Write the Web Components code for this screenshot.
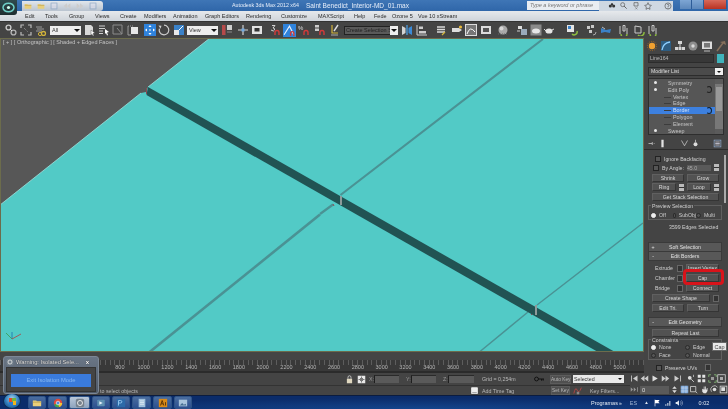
<!doctype html>
<html>
<head>
<meta charset="utf-8">
<style>
  html, body { margin: 0; padding: 0; background: #444; }
  body { font: 6.5px "Liberation Sans", sans-serif; overflow: hidden; }
</style>
</head>
<body>
<max-app></max-app>
<script>
"use strict";
// small 12x12 glyphs, all hand drawn to look like the Max toolbar
const ICONS = {
  link: '<circle cx="3.5" cy="3.5" r="2.4" fill="none" stroke="#c9c9c9" stroke-width="1.4"/><circle cx="8.5" cy="8.5" r="2.4" fill="none" stroke="#b0b0b0" stroke-width="1.4"/><path d="M5 5l2 2" stroke="#ddd"/>',
  unlink: '<path d="M1 4V1h3M8 1h3v3M11 8v3H8M4 11H1V8" fill="none" stroke="#bbb" stroke-width="1.2"/><path d="M4 4l4 4" stroke="#999" stroke-dasharray="1 1"/>',
  bind: '<path d="M1 3h6M2 5h7M1 7h6" stroke="#9a9a9a"/><circle cx="8.5" cy="9.5" r="2" fill="none" stroke="#d2b33a" stroke-width="1.3"/><circle cx="5" cy="10" r="1.6" fill="none" stroke="#d2b33a"/>',
  select: '<path d="M1 1h6l2 2v8H1z" fill="#d9d9d9"/><path d="M7 6l4 3-2 .5 1 2-1 .5-1-2-1 1z" fill="#fff" stroke="#333" stroke-width=".4"/>',
  named: '<path d="M1 2h6M1 4.500h6M1 7h4M1 9.500h4" stroke="#cfcfcf"/><path d="M7 5l4 3-2 .5 1 2.500-1 .5-1-2.500-1 1z" fill="#fff"/>',
  rect: '<path d="M1 1h9v9H1z" fill="none" stroke="#8b8b8b"/><path d="M10 10L5 4" stroke="#8b8b8b"/>',
  win: '<path d="M1 2h6" stroke="#999" stroke-dasharray="1 1"/><rect x="4" y="3" width="7" height="7" fill="#e6e6e6"/><path d="M1 2v9h3" fill="none" stroke="#999"/>',
  move: '<rect width="12" height="12" fill="#2f83dc"/><path d="M6 1l1.500 2h-3zM6 11l1.500-2h-3zM1 6l2-1.500v3zM11 6L9 4.500v3z" fill="#fff"/><rect x="5.300" y="5.300" width="1.400" height="1.400" fill="#fff"/>',
  rotate: '<path d="M6 1.200a4.800 4.800 0 1 1-4.600 3.400" fill="none" stroke="#cfcfcf" stroke-width="1.200"/><path d="M.5 1.500l3 .3-1 3z" fill="#cfcfcf"/>',
  scale: '<rect x="1" y="1" width="10" height="10" fill="#3b82c8"/><rect x="1" y="6" width="5" height="5" fill="#e8e8e8"/><path d="M6 6l4-4" stroke="#fff"/>',
  pivot: '<rect x="1" y="1" width="3.500" height="10" fill="#b64a4a"/><rect x="6" y="1" width="5" height="5" fill="#cfcfcf"/><path d="M6 8h5" stroke="#888"/>',
  cross: '<path d="M6 1v10M1 6h10" stroke="#cfcfcf" stroke-width="1.200"/><rect x="4.500" y="4.500" width="3" height="3" fill="#6fa7df"/>',
  keys: '<rect x="1" y="2" width="10" height="8" fill="#e2e2e2"/><rect x="3.500" y="4" width="5" height="3.500" fill="#333"/>',
  snap3: '<path d="M3 1.500h3L4 4q2 0 1.500 2T2 6" fill="none" stroke="#e0e0e0" stroke-width=".9"/><path d="M6 11V8.500a2 2 0 0 1 4 0V11" fill="none" stroke="#d23a3a" stroke-width="1.400"/>',
  snapA: '<rect width="12" height="12" fill="#2f83dc"/><path d="M1 10L6 2l4 8" fill="none" stroke="#e8f2ff"/><path d="M7 11V8.500a1.500 1.500 0 0 1 3 0V11" fill="none" stroke="#d23a3a" stroke-width="1.300"/>',
  snapP: '<text x="0" y="6" font-size="6" fill="#ddd" font-family="Liberation Sans">%</text><path d="M6 11V8.500a2 2 0 0 1 4 0V11" fill="none" stroke="#d23a3a" stroke-width="1.400"/>',
  snapS: '<path d="M1 1h4v2.500H1zM1 4.500h4V7H1z" fill="#ccc"/><path d="M6 11V8.500a2 2 0 0 1 4 0V11" fill="none" stroke="#d23a3a" stroke-width="1.400"/>',
  edit: '<path d="M3 1v8h6" fill="none" stroke="#d2b33a" stroke-width="1.200"/><path d="M9 1L5 7" stroke="#ddd" stroke-width="1.400"/><path d="M2 11h7" stroke="#aaa"/>',
  mirror: '<path d="M1 2l3.500 2v5L1 11z" fill="#d3d3d3"/><path d="M6 1v10" stroke="#4ea3ea" stroke-width="1.200"/><path d="M11 2L7.500 4v5l3.500 2z" fill="#3b8ad6"/>',
  align: '<path d="M1 1v10h10" fill="none" stroke="#ccc"/><rect x="3" y="2.500" width="4" height="2.500" fill="#ccc"/><rect x="3" y="7" width="7" height="2.500" fill="#ccc"/>',
  layer: '<path d="M2 3h8M2 5.500h8M2 8h8" stroke="#d8d8d8" stroke-width="1.400"/><path d="M7 11l3-3" stroke="#d2b33a" stroke-width="1.200"/>',
  tag: '<path d="M1 4h7l3 2-3 2H1z" fill="#ddd"/><circle cx="9.500" cy="3" r="1.600" fill="#e8b93a"/>',
  curve: '<rect x=".5" y=".5" width="11" height="11" fill="#777" stroke="#ddd"/><path d="M2 10Q5 1 10 8" fill="none" stroke="#fff"/>',
  sch: '<rect x="1" y="2" width="10" height="8" fill="#dcdcdc"/><rect x="3" y="4" width="6" height="4" fill="#555"/>',
  mat: '<circle cx="6" cy="6" r="4.500" fill="#a9a9a9"/><circle cx="4.500" cy="4.500" r="2" fill="#d8d8d8"/><path d="M1 10h10" stroke="#666" stroke-dasharray="1 1"/>',
  rsetup: '<path d="M2 2h4v3H2z" fill="#ddd"/><path d="M5 5h6v6H5z" fill="#9ab"/><path d="M1 7h3" stroke="#ccc"/>',
  rframe: '<rect x=".5" y=".5" width="11" height="11" fill="#8a8a8a"/><ellipse cx="6" cy="7" rx="4" ry="2.500" fill="#e6e6e6"/>',
  teapot: '<ellipse cx="6" cy="7" rx="3.500" ry="2.600" fill="#e5e5e5"/><path d="M1 5l2 2M9 6l2-1" stroke="#ddd"/>',
  vue1: '<rect x="1" y="1" width="7" height="7" fill="#e5e5e5"/><rect x="2" y="2" width="3" height="3" fill="#3b82c8"/><path d="M6 10a3 3 0 0 0 5-3" fill="none" stroke="#8fbf3f" stroke-width="1.400"/>',
  vue2: '<path d="M2 2h3v3H2zM6 1h3v3H6zM4 6h3v3H4z" fill="#c8c8c8"/><path d="M8 11a3 3 0 0 0 3-3" fill="none" stroke="#aaa"/>',
  vue3: '<path d="M1 4l5 2 5-1-1 4-5-1-4 1z" fill="#3b82c8"/><path d="M2 3l3 2" stroke="#bbb"/>',
  vue4: '<path d="M2 2v8M5 1.500h2V7H5zM9 4v6" stroke="#c8c8c8" fill="none"/><path d="M3 10a3 3 0 0 0 6 0" fill="none" stroke="#8fbf3f" stroke-width="1.300"/>',
  vue5: '<path d="M2 2l6 1v6H2z" fill="none" stroke="#c8c8c8"/><path d="M5 11a3.500 3.500 0 0 0 6-3" fill="none" stroke="#8fbf3f" stroke-width="1.400"/>',
  sun: '<circle cx="6" cy="6" r="3.200" fill="#f0a030"/><circle cx="6" cy="6" r="4.600" fill="none" stroke="#a86a20" stroke-dasharray="1 1"/>',
  arc: '<rect x="1" y="1" width="10" height="10" fill="#2e5d82"/><path d="M2 10Q3 3 10 2" fill="none" stroke="#8fd0ff" stroke-width="1.300"/>',
  tree: '<path d="M4 1h4v3H4zM1 7h3v3H1zM8 7h3v3H8zM4.500 7H7.500v3h-3z" fill="#d4d4d4"/><path d="M6 4v3" stroke="#d4d4d4"/>',
  motion: '<circle cx="6" cy="6" r="4.500" fill="#8d8d8d"/><circle cx="6" cy="6" r="1.700" fill="#d8d8d8"/>',
  display: '<rect x="1" y="1.500" width="10" height="7.500" fill="#dcdcdc"/><rect x="3" y="3" width="6" height="4.500" fill="#777"/><path d="M3 11h6" stroke="#bbb"/>',
  hammer: '<path d="M2 11L8 3" stroke="#86705c" stroke-width="1.500"/><path d="M5 2l5-1 1 4z" fill="#86705c"/>',
  pin: '<path d="M2 6h5M7 4v4M9 6h1" stroke="#ccc"/>',
  col: '<rect x="4.500" y="1" width="3" height="10" fill="#e2e2e2"/>',
  fork: '<path d="M2 2l4 7 4-7" fill="none" stroke="#ccc"/>',
  dot: '<circle cx="6" cy="7" r="2.600" fill="#ddd"/><path d="M6 1v3" stroke="#ccc"/>',
  cfg: '<rect x="1.500" y="1.500" width="9" height="9" fill="none" stroke="#8ea6c8"/><path d="M3 4h6M3 6h6M3 8h6" stroke="#dde"/>',
  lock: '<rect x="2.500" y="5" width="7" height="6" fill="#e0d8c0"/><path d="M4 5V3a2 2 0 0 1 4 0v2" fill="none" stroke="#e0e0e0"/>',
  abs: '<rect x="1" y="1" width="10" height="10" fill="#e8e8e8"/><path d="M6 2v8M2 6h8" stroke="#555"/><rect x="4" y="4" width="4" height="4" fill="#777"/>',
  minibox: '<rect x="1.500" y="1.500" width="9" height="9" rx="1" fill="#eee"/><path d="M3 9h6" stroke="#777"/>',
  key: '<circle cx="3" cy="6" r="2.300" fill="none" stroke="#111" stroke-width="1.200"/><path d="M5 6h7M9 6v2M11 6v2" stroke="#111" stroke-width="1.200"/>',
  wave: '<path d="M1 9q2-9 4-4t5-3" fill="none" stroke="#b34444" stroke-width="1.100"/><rect x="4.500" y="7" width="3" height="3" fill="#888"/>',
  first: '<path d="M2 2v8" stroke="#ddd"/><path d="M10 2L4 6l6 4z" fill="#ccc"/>',
  prev: '<path d="M6 2L1 6l5 4zM11 2L6 6l5 4z" fill="#ccc"/>',
  play: '<path d="M2 2l7 4-7 4z" fill="#ddd"/>',
  next: '<path d="M1 2l5 4-5 4zM6 2l5 4-5 4z" fill="#ccc"/>',
  last: '<path d="M2 2l6 4-6 4z" fill="#ccc"/><path d="M10 2v8" stroke="#ddd"/>',
  keymode: '<path d="M1 3l3 3-3 3zM5 3l3 3-3 3z" fill="#999"/><path d="M10 3v6" stroke="#999"/>',
  zoom: '<circle cx="5" cy="5" r="2.500" fill="#ddd"/><path d="M7 7l3.500 3.500" stroke="#ccc" stroke-width="1.300"/><path d="M10 1v3" stroke="#ccc"/>',
  quad: '<path d="M1 1h4v4H1zM7 1h4v4H7zM1 7h4v4H1zM7 7h4v4H7z" fill="#e3e3e3"/>',
  ext: '<path d="M1 4V1h3M8 1h3v3M11 8v3H8M4 11H1V8" fill="none" stroke="#8ac27a"/><rect x="4" y="4" width="4" height="4" fill="#9a9a9a"/>',
  frame: '<rect x="1" y="1" width="10" height="10" fill="none" stroke="#ddd"/><path d="M4 4h4v4H4z" fill="#aaa"/>',
  grid: '<rect x="1" y="1" width="10" height="10" fill="#7aa5d8"/><path d="M4 1v10M8 1v10M1 4h10M1 8h10" stroke="#e8eef8" stroke-width=".6"/>',
  corner: '<path d="M2 2h7v7H2z" fill="none" stroke="#ddd"/><path d="M9 9l2 2" stroke="#ddd"/>',
  hand: '<path d="M3 5v4l2 2h3l2-3V4H9v2H8V2H7v4H6V2H5v4z" fill="#e3e3e3"/>',
  orbit: '<circle cx="6" cy="6" r="2.400" fill="#ddd"/><path d="M2 9a5 5 0 0 1 8-6" fill="none" stroke="#ccc"/>',
  maxim: '<rect x="1.500" y="1.500" width="9" height="9" fill="none" stroke="#ddd"/><rect x="3" y="3" width="5" height="5" fill="#ddd"/>',
  spin: '<path d="M6 1.500L9 5H3zM6 10.500L3 7h6z" fill="#ddd"/>',
  find: '<circle cx="3.500" cy="6" r="2.300" fill="#333"/><circle cx="8.500" cy="6" r="2.300" fill="#333"/><rect x="4.500" y="2" width="3" height="3" fill="#333"/>',
  key2: '<circle cx="4" cy="4" r="3" fill="none" stroke="#555"/><path d="M6 6l4 4" stroke="#555" stroke-width="1.300"/>',
  person: '<path d="M3 1h6v5H3z" fill="none" stroke="#555"/><path d="M5 8l3 3M8 8l-3 3" stroke="#777"/>',
  star: '<path d="M6 1l1.500 3.500L11 5 8.500 7.500 9 11 6 9.200 3 11l.5-3.500L1 5l3.500-.5z" fill="none" stroke="#555"/>',
  help: '<circle cx="6" cy="6" r="4.600" fill="none" stroke="#555"/><path d="M4.500 4.500a1.500 1.500 0 1 1 1.500 2V8M6 9v1" fill="none" stroke="#555"/>',
  folder: '<path d="M1 3h4l1 1h5v6H1z" fill="#e8cf7a"/><path d="M1 5h10" stroke="#bda24e"/>',
  chrome: '<circle cx="6" cy="6" r="5" fill="#e04a3a"/><path d="M6 6L1.400 8a5 5 0 0 0 6 2.800z" fill="#3ba84a"/><path d="M6 6l1.400 4.800A5 5 0 0 0 11 6z" fill="#f2c530"/><circle cx="6" cy="6" r="2.200" fill="#4a90e2" stroke="#fff" stroke-width=".7"/>',
  max: '<rect x="1" y="1" width="10" height="10" rx="2" fill="#74808c"/><circle cx="6" cy="6" r="3" fill="none" stroke="#e6e6e6" stroke-width="1.200"/>',
  media: '<rect x="1.500" y="2" width="9" height="8" rx="1" fill="#5c8fb0"/><path d="M4 4l4 2-4 2z" fill="#e5f2fa"/>',
  ps: '<rect x="1" y="1" width="10" height="10" fill="#2c6aa8"/><path d="M3 9V3h2.500a1.500 1.500 0 0 1 0 3H3" fill="none" stroke="#9fd0f5"/>',
  notes: '<rect x="2" y="1" width="8" height="10" fill="#9fc0dc"/><path d="M3.500 3.500h5M3.500 5.500h5M3.500 7.500h5" stroke="#fff" stroke-width=".7"/>',
  ai: '<rect x="1" y="1" width="10" height="10" fill="#d98a18"/><path d="M3 9l2-6 2 6M4 7h2M9 5v4" fill="none" stroke="#4a2a05"/>',
  img: '<rect x="1" y="2" width="10" height="8" fill="#a8c4dc"/><path d="M2 9l3-3 2 2 2-1 1 2z" fill="#456e92"/>',
  flag: '<path d="M3 1v10" stroke="#fff"/><path d="M3 1.500h7l-2 2.500 2 2.500H3z" fill="#fff"/>',
  bars: '<path d="M2 10h1.500V8H2zM5 10h1.500V6H5zM8 10h1.500V3H8z" fill="#dfe6ef"/>',
  vol: '<path d="M1 4.500h2L6 2v8L3 7.500H1z" fill="#dfe6ef"/><path d="M8 3.500a3.500 3.500 0 0 1 0 5M9.500 2a5.500 5.500 0 0 1 0 8" fill="none" stroke="#dfe6ef" stroke-width=".7"/>'
};

const svg = (name, size = 12) => `<svg width="${size}" height="${size}" viewBox="0 0 12 12" style="display:block;flex:none">${ICONS[name] || ''}</svg>`;

// turns [[x, html], ...] into flex cells whose widths are the distance to the next x
const cells = (start, end, items) => items.map(([x, html], i) => {
  const next = i + 1 < items.length ? items[i + 1][0] : end;
  return `<span style="flex:none;display:flex;align-items:center;width:${next - x}px">${html}</span>`;
}).join('');

class MaxElement extends HTMLElement {
  connectedCallback() {
    if (this.shadowRoot) return;
    this.attachShadow({ mode: 'open' }).innerHTML = this.render();
  }
}

class MaxTitlebar extends MaxElement {
  render() {
    const quick = ['folder', 'folder', 'cfg', 'prev', 'next', 'cfg'];
    return `<style>
      :host { display: flex; height: 11px; align-items: center; background: linear-gradient(#3f76b6, #2f66a9); color: #e6eefa; font-size: 6.5px; position: relative; white-space: nowrap; }
      .logo { flex: none; width: 17px; height: 15px; margin-right: 5px; background: linear-gradient(#2f4a4d, #1f2e30); border-radius: 0 0 3px 0; display: flex; align-items: center; justify-content: center; position: relative; z-index: 2; align-self: flex-start; }
      .quick { flex: none; width: 81px; height: 10px; background: linear-gradient(#e2e7ec, #b9c3cf); display: flex; align-items: center; gap: 5px; padding-left: 2px; box-sizing: border-box; border-radius: 0 3px 3px 0; }
      .title { flex: none; width: 424px; padding-left: 129px; box-sizing: border-box; display: flex; }
      .title .app { flex: none; width: 74px; font-size: 5.300px; }
      .search { flex: none; width: 72px; height: 9px; background: #e9edf2; color: #777; font-style: italic; font-size: 5.500px; line-height: 9px; padding-left: 3px; box-sizing: border-box; }
      .tools { flex: none; width: 74px; display: flex; gap: 4px; padding-left: 9px; box-sizing: border-box; background: #cfd8e2; height: 10px; align-items: center; margin-right: 7px; }
      .win { display: flex; height: 9px; align-self: flex-start; }
      .win i { display: block; height: 9px; width: 11px; background: linear-gradient(#7ea6d4, #5d88bb); border-right: 1px solid #2d5c98; }
      .win i.x { width: 22px; background: linear-gradient(#d8695a, #b83222); }
    </style>
    <span class="logo"><svg width="13" height="11" viewBox="0 0 13 11"><ellipse cx="6.500" cy="5.500" rx="5.500" ry="4.300" fill="none" stroke="#6fd0c8" stroke-width="1.500"/><circle cx="6.500" cy="5.500" r="1.600" fill="#cfe"/></svg></span>
    <span class="quick">${quick.map(n => svg(n, 8)).join('')}</span>
    <span class="title"><span class="app">Autodesk 3ds Max  2012 x64</span><span>Saint Benedict_Interior-MD_01.max</span></span>
    <span class="search">Type a keyword or phrase</span>
    <span class="tools">${['find', 'key2', 'person', 'star'].map(n => svg(n, 8)).join('')}<span style="width:4px"></span>${svg('help', 8)}</span>
    <span class="win"><i></i><i></i><i class="x"></i></span>`;
  }
}

class MaxMenubar extends MaxElement {
  render() {
    const menu = [[25, 'Edit'], [45, 'Tools'], [69, 'Group'], [95, 'Views'], [120, 'Create'], [144, 'Modifiers'], [173, 'Animation'], [205, 'Graph Editors'], [246, 'Rendering'], [281, 'Customize'], [318, 'MAXScript'], [354, 'Help'], [374, 'Fede'], [392, 'Ozone 5'], [418, 'Vue 10 xStream']];
    return `<style>
      :host { display: flex; height: 10px; align-items: center; background: linear-gradient(#e6e9ec, #cfd4da); color: #2a2a2a; font-size: 5.500px; padding-left: 25px; white-space: nowrap; }
    </style>${cells(25, 470, menu.map(([x, t]) => [x, `<span>${t}</span>`]))}`;
  }
}

class MaxToolbar extends MaxElement {
  render() {
    const combo = (w, t, cls = '') => `<span class="combo ${cls}" style="width:${w}px">${t}<b></b></span>`;
    const items = [[5, svg('link')], [20, svg('unlink')], [35, svg('bind')], [50, combo(31, 'All')], [84, svg('select')], [98, svg('named')], [112, svg('rect')], [127, svg('win')], [144, svg('move')], [158, svg('rotate')], [173, svg('scale')], [187, combo(31, 'View')], [221, svg('pivot')], [237, svg('cross')], [251, svg('keys')], [269, svg('snap3')], [283, svg('snapA', 13)], [298, svg('snapP')], [314, svg('snapS')], [329, svg('edit')], [344, combo(54, 'Create Selection Se', 'dark')], [401, svg('mirror')], [416, svg('align')], [435, svg('layer')], [451, svg('tag')], [465, svg('curve')], [480, svg('sch')], [497, svg('mat')], [516, svg('rsetup')], [530, svg('rframe')], [543, svg('teapot')], [566, svg('vue1')], [585, svg('vue2')], [600, svg('vue3')], [618, svg('vue4')], [633, svg('vue5')], [647, svg('vue4')]];
    return `<style>
      :host { display: flex; height: 17px; align-items: center; background: #444; padding-left: 5px; white-space: nowrap; border-top: 1px solid #333; box-sizing: border-box; }
      .combo { display: block; position: relative; height: 9px; line-height: 9px; background: #eee; color: #333; font-size: 5.500px; padding-left: 2px; box-sizing: border-box; overflow: hidden; white-space: nowrap; }
      .combo.dark { background: #5a5a5a; color: #222; outline: 1px solid #222; outline-offset: -1px; }
      .combo b { position: absolute; right: 0; top: 0; width: 8px; height: 9px; background: #eee; }
      .combo b::after { content: ""; position: absolute; left: 1px; top: 3px; border: 3px solid transparent; border-top-color: #111; border-bottom: 0; }
    </style>${cells(5, 665, items)}`;
  }
}

class MaxViewport extends MaxElement {
  render() {
    return `<style>
      :host { display: block; position: relative; background: #52cac6; overflow: hidden; }
      svg.scene { display: block; width: 644px; height: 314px; }
      .label { position: absolute; left: 3px; top: 1px; color: #c4c4c4; font-size: 5.500px; white-space: pre; }
    </style>
    <svg class="scene" viewBox="0 38 644 314">
      <rect x="0" y="38" width="644" height="314" fill="#52cac6"/>
      <path d="M0 38H210L148 87 146 92 141 93 0 205Z" fill="#575757"/>
      <path d="M0 205L141 93M148 87L210 38" stroke="#9ee0dc" stroke-width=".8" fill="none"/>
      <path d="M320 214L333 204.500M340.500 195L543 39" stroke="#4a9294" stroke-width="2.200" fill="none"/>
      <path d="M149 352.500L320 214.500" stroke="#4a9294" stroke-width="2.600" fill="none"/>
      <path d="M643 223L537 305M528 312L480 351.500" stroke="#4a9294" stroke-width="1.400" fill="none"/>
      <path d="M148 87L615 352H598L146.500 95Z" fill="#215353"/>
      <path d="M341 196v9M536 305v10" stroke="#8d9a9a" stroke-width="2" fill="none"/>
      <path d="M146.500 88v6M333 204l1 2M531 314l1 1" stroke="#8c4a55" stroke-width="1" fill="none"/>
      <g fill="none" stroke-width=".8">
        <path d="M12 339V332" stroke="#1d6fb0"/><path d="M12 339L21 334" stroke="#b04040"/><path d="M12 339L6 333" stroke="#3a9a50"/>
      </g>
      <rect x=".5" y="38.500" width="643" height="313" fill="none" stroke="#6c6c4c"/>
    </svg>
    <span class="label">[ + ] [ Orthographic ] [ Shaded + Edged Faces ]</span>`;
  }
}

class MaxBtn extends MaxElement {
  render() {
    return `<style>
      :host { display: flex; align-items: center; justify-content: center; height: 8px; box-sizing: border-box; background: #525252; border: 1px solid #606060; border-bottom-color: #353535; border-right-color: #353535; color: #d8d8d8; font-size: 5.200px; white-space: nowrap; overflow: hidden; }
    </style><slot></slot>`;
  }
}

class MaxRollout extends MaxElement {
  render() {
    return `<style>
      :host { display: flex; align-items: center; height: 8px; background: #585858; color: #e0e0e0; font-size: 5.200px; border: 1px solid #3a3a3a; box-sizing: content-box; position: relative; }
      b { flex: none; width: 8px; text-align: center; font-weight: 400; }
      span { flex: 1; text-align: center; padding-right: 8px; }
    </style><b>${this.getAttribute('sign')}</b><span><slot></slot></span>`;
  }
}

class MaxStack extends MaxElement {
  render() {
    const row = (t, cls = '', pre = '', post = '') => `<div class="r ${cls}">${pre}<span>${t}</span>${post}</div>`;
    const ring = '<i class="ring"></i>';
    const dot = '<i class="dot"></i>';
    return `<style>
      :host { display: flex; height: 57px; border: 1px solid #2e2e2e; background: #565656; color: #c6c6c6; font-size: 5.400px; box-sizing: border-box; }
      .list { flex: 1; overflow: hidden; padding-top: .5px; }
      .r { display: flex; align-items: center; height: 6.850px; position: relative; padding-left: 19px; white-space: nowrap; }
      .r.sub { padding-left: 24px; }
      .r.sub::before { content: ""; position: absolute; left: 15px; width: 7px; top: 50%; border-top: 1px solid #3c3c3c; }
      .r.sel { background: #3d80df; color: #cfe0f8; }
      .dot { position: absolute; left: 5px; width: 3px; height: 3px; border-radius: 50%; background: #e8e8e8; }
      .ring { position: absolute; right: 3px; width: 4px; height: 5px; border: 1px solid #222; border-left-color: transparent; border-radius: 50%; }
      .sel .ring { border-color: #123 #123 #123 transparent; }
      .bar { flex: none; width: 8px; background: #777; display: flex; flex-direction: column; justify-content: space-between; }
      .bar i { display: block; height: 5px; background: #5b5b5b; }
      .bar u { display: block; height: 24px; margin: -16px 1px 0; background: #999; }
    </style>
    <div class="list">
      ${row('Symmetry', '', dot)}
      ${row('Edit Poly', '', dot, ring)}
      ${row('Vertex', 'sub')}
      ${row('Edge', 'sub')}
      ${row('Border', 'sub sel', '', ring)}
      ${row('Polygon', 'sub')}
      ${row('Element', 'sub')}
      ${row('Sweep', '', dot)}
    </div>
    <div class="bar"><i></i><u></u><i></i></div>`;
  }
}

class MaxCmdPanel extends MaxElement {
  render() {
    const tabs = ['sun', 'arc', 'tree', 'motion', 'display', 'hammer'];
    const radio = (t, on) => `<span class="radio"><i class="${on ? 'on' : ''}"></i>${t}</span>`;
    const box = w => `<i class="box" style="width:${w}px"></i>`;
    return `<style>
      :host { display: block; position: relative; background: #444; color: #d0d0d0; font-size: 5.200px; overflow: hidden; box-sizing: border-box; }
      .tabs { display: flex; height: 13px; align-items: center; gap: 1.800px; padding: 1px 0 0 2px; }
      .top { padding: 2px 4px 0; display: flex; flex-direction: column; }
      .name { display: flex; gap: 3px; height: 9px; margin-bottom: 4px; }
      .name span { flex: 1; background: #383838; border: 1px solid #2c2c2c; color: #bbb; line-height: 7px; padding-left: 1px; }
      .name i { flex: none; width: 7px; background: #3fb4bc; }
      .modlist { display: flex; height: 9px; margin-bottom: 2px; background: #4b4b4b; color: #ddd; line-height: 9px; padding-left: 2px; position: relative; border: 1px solid #2c2c2c; box-sizing: border-box; align-items: center; }
      .modlist b { position: absolute; right: 0; top: 0; bottom: 0; width: 8px; background: #f0f0f0; }
      .modlist b::after { content: ""; position: absolute; left: 2px; top: 3px; border: 2px solid transparent; border-top-color: #111; border-bottom: 0; }
      .stackbar { display: flex; height: 12px; align-items: center; justify-content: space-between; padding: 0 6px 0 3px; border-bottom: 1px solid #2c2c2c; margin-bottom: 5px; }
      .stackbar .g { display: flex; gap: 2px; }
      .body { display: flex; }
      .main { flex: 1; padding: 0 1px 0 4px; display: flex; flex-direction: column; min-width: 0; }
      .scroll { flex: none; width: 5px; position: relative; }
      .scroll::after { content: ""; position: absolute; left: 1px; top: 0; width: 2px; height: 48px; background: #aaa; }
      .line { display: flex; align-items: center; gap: 3px; height: 9px; white-space: nowrap; }
      .line.p { padding: 0 3px 0 4px; }
      .line.t { padding-left: 7px; }
      .line > max-btn { flex: 1; min-width: 0; }
      .box { display: block; flex: none; height: 4px; width: 4px; border: 1px solid #222; background: #555; }
      .group { border: 1px solid #5f5f5f; margin: 4px 0 0; padding: 0 2px; position: relative; height: 13px; display: flex; align-items: flex-end; box-sizing: content-box; }
      .group .radio { width: 23px; }
      .group .radio:first-of-type { width: 22px; }
      .group.two { height: 19px; flex-wrap: wrap; align-content: flex-end; margin-top: 2px; }
      .group.two .radio { width: 34px; }
      .group em { position: absolute; left: 2px; top: -3px; font-style: normal; background: #444; padding: 0 1px; }
      .radio { display: flex; align-items: center; gap: 3px; height: 8px; color: #ccc; }
      .radio i { display: block; width: 3px; height: 3px; border-radius: 50%; border: 1px solid #2a2a2a; background: #555; }
      .radio i.on { background: #eee; border-color: #eee; }
      .count { height: 21px; line-height: 12px; padding: 1px 0 0 21px; white-space: nowrap; }
      .mini { flex: none; width: 4px; height: 5px; background: #333; border: 1px solid #666; }
      .stripe { flex: none; width: 5px; height: 7px; background: linear-gradient(#bbb 45%, #333 45% 55%, #bbb 55%); }
      .red { position: absolute; left: 39px; top: 231px; width: 41px; height: 16px; box-sizing: border-box; border: 3px solid #d8131a; border-radius: 4px; }
      .tip { position: absolute; left: 68px; top: 304px; width: 15px; height: 9px; background: #e9e9e9; color: #444; font-size: 5.500px; line-height: 9px; text-align: center; border: 1px solid #666; box-sizing: border-box; }
    </style>
    <div class="tabs">${tabs.map(n => svg(n)).join('')}</div>
    <div class="top">
      <div class="name"><span>Line164</span><i></i></div>
      <div class="modlist">Modifier List<b></b></div>
      <max-stack></max-stack>
    </div>
    <div class="stackbar" style="margin-top:2px">
      <span class="g">${svg('pin', 9)}${svg('col', 9)}</span>
      <span class="g">${svg('fork', 9)}${svg('dot', 9)}</span>
      ${svg('cfg', 9)}
    </div>
    <div class="body">
      <div class="main">
        <div class="line p t" style="height:8px">${box(4)}Ignore Backfacing</div>
        <div class="line p t" style="height:9px;padding-left:5px">${box(4)}By Angle: <span style="flex:1;background:#5a5a5a;color:#aaa;height:6px;line-height:6px">45.0</span><i class="stripe"></i></div>
        <div class="line p" style="margin-top:1px"><max-btn>Shrink</max-btn><max-btn>Grow</max-btn></div>
        <div class="line p" style="height:10px"><max-btn>Ring</max-btn><i class="stripe"></i><max-btn>Loop</max-btn><i class="stripe"></i></div>
        <div class="line p"><max-btn>Get Stack Selection</max-btn></div>
        <div class="group"><em>Preview Selection</em>${radio('Off', 1)}${radio('SubObj')}${radio('Multi')}</div>
        <div class="count">3599 Edges Selected</div>
        <max-rollout sign="+">Soft Selection</max-rollout>
        <max-rollout sign="-" style="border-top:0">Edit Borders</max-rollout>
        <div class="line p t" style="margin-top:2px;height:10px"><span style="flex:none;width:19px">Extrude</span><i class="mini"></i><max-btn>Insert Vertex</max-btn></div>
        <div class="line p t" style="height:10px"><span style="flex:none;width:19px">Chamfer</span><i class="mini"></i><max-btn>Cap</max-btn></div>
        <div class="line p t" style="height:10px"><span style="flex:none;width:19px">Bridge</span><i class="mini"></i><max-btn>Connect</max-btn></div>
        <div class="line p" style="height:10px"><max-btn>Create Shape</max-btn><i class="mini"></i></div>
        <div class="line p" style="height:10px"><max-btn>Edit Tri.</max-btn><max-btn>Turn</max-btn></div>
        <max-rollout sign="-" style="margin-top:4px">Edit Geometry</max-rollout>
        <div class="line p" style="height:9px;margin-top:1px"><max-btn>Repeat Last</max-btn></div>
        <div class="group two"><em>Constraints</em>${radio('None', 1)}${radio('Edge')}${radio('Face')}${radio('Normal')}</div>
        <div class="line p" style="margin-top:3px;padding-left:8px">${box(4)}Preserve UVs <i class="mini" style="margin-left:auto;margin-right:8px"></i></div>
      </div>
      <div class="scroll"></div>
    </div>
    <span class="red"></span>
    <span class="tip">Cap</span>`;
  }
}

class MaxRuler extends MaxElement {
  render() {
    let labels = '';
    for (let n = 800; n <= 5000; n += 200) labels += `<span>${n}</span>`;
    return `<style>
      :host { display: flex; flex-direction: column; background: #444; overflow: hidden; }
      .slider { flex: none; height: 8px; background: #454545; }
      .scale { flex: none; height: 11px; background-color: #393939; color: #b4b4b4; font-size: 5.500px; display: flex; align-items: flex-end; padding-left: 108px;
        background-image: repeating-linear-gradient(90deg, #5d5d5d 0 1px, transparent 1px 4.762px); background-size: 100% 5px; background-repeat: no-repeat; }
      .scale span { flex: none; width: 23.810px; text-align: center; line-height: 7px; }
      .rule { flex: none; height: 2px; background: #2b2b2b; }
    </style><div class="slider"></div><div class="scale">${labels}</div><div class="rule"></div>`;
  }
}

class MaxStatus extends MaxElement {
  render() {
    const field = w => `<i class="field" style="width:${w}px"></i>`;
    const top = [[0, ''], [345, svg('lock', 9)], [357, svg('abs', 9)], [369, '<span class="dim">X:</span>'], [374, field(25)], [406, '<span class="dim">Y:</span>'], [411, field(25)], [443, '<span class="dim">Z:</span>'], [448, field(26)], [482, '<span>Grid = 0,254m</span>'], [534, svg('key', 10)], [550, '<span class="btn" style="width:21px">Auto Key</span>'], [573, '<span class="sel">Selected<b></b></span>']];
    const bottom = [[98, '<span style="padding-left:2px">to select objects</span>'], [470, svg('minibox', 9)], [482, '<span>Add Time Tag</span>'], [551, '<span class="btn" style="width:19px">Set Key</span>'], [573, svg('wave', 10)], [590, '<span>Key Filters...</span>']];
    return `<style>
      :host { display: flex; flex-direction: column; background: #444; color: #b8b8b8; font-size: 5.300px; white-space: nowrap; overflow: hidden; }
      .row { display: flex; align-items: center; flex: none; }
      .a { height: 12px; border-bottom: 1px solid #333; }
      .b { height: 9px; }
      .field { display: block; height: 8px; background: #5a5a5a; border-left: 1px solid #1e1e1e; border-top: 1px solid #2a2a2a; box-sizing: border-box; }
      .dim { color: #999; }
      .btn { display: block; text-align: center; background: #505050; border: 1px solid #5c5c5c; box-sizing: border-box; height: 9px; line-height: 7px; font-size: 4.800px; }
      .sel { display: block; position: relative; width: 51px; height: 8px; line-height: 8px; background: #e9e9e9; color: #333; padding-left: 1px; box-sizing: border-box; }
      .sel b { position: absolute; right: 2px; top: 3px; border: 2.500px solid transparent; border-top-color: #111; border-bottom: 0; }
    </style>
    <div class="row a">${cells(0, 630, top)}</div>
    <div class="row b" style="padding-left:98px">${cells(98, 630, bottom)}</div>`;
  }
}

class MaxNav extends MaxElement {
  render() {
    const ic = n => svg(n, 9);
    return `<style>
      :host { display: flex; flex-direction: column; background: #444; color: #bbb; font-size: 5.800px; }
      .row { display: flex; align-items: center; height: 11px; }
      .f { display: block; width: 29px; height: 8px; background: #5a5a5a; line-height: 8px; padding-left: 2px; box-sizing: border-box; color: #ddd; }
    </style>
    <div class="row">${cells(630, 728, [[630, ic('first')], [640, ic('prev')], [651, ic('play')], [661, ic('next')], [673, ic('last')], [686, ic('zoom')], [697, ic('quad')], [708, ic('ext')], [717, ic('frame')]])}</div>
    <div class="row">${cells(630, 728, [[630, ic('keymode')], [640, '<span class="f">0</span>'], [670, ic('spin')], [680, ic('grid')], [689, ic('corner')], [700, ic('hand')], [710, ic('orbit')], [719, ic('maxim')]])}</div>`;
  }
}

class MaxDialog extends MaxElement {
  render() {
    return `<style>
      :host { display: block; position: absolute; left: 3px; top: 356px; width: 96px; height: 38px; box-sizing: border-box; background: linear-gradient(#6a7686, #505a68); border: 1px solid #7c8796; border-radius: 3px; color: #e8e8e8; font-size: 5.800px; padding: 0 2px 2px; }
      .t { display: flex; align-items: center; gap: 2px; height: 10px; white-space: nowrap; text-shadow: 0 0 1px #000; }
      .t b { margin-left: auto; margin-right: 7px; font-size: 6px; color: #fff; }
      .in { background: #444; height: 25px; padding: 6px 4px 0; box-sizing: border-box; border: 1px solid #333; }
      .btn { background: #3a7bdc; color: #86b8f2; height: 13px; line-height: 13px; text-align: center; }
    </style>
    <div class="t">${svg('max', 8)}<span>Warning: Isolated Sele...</span><b>x</b></div>
    <div class="in"><div class="btn">Exit Isolation Mode</div></div>`;
  }
}

class MaxTaskbar extends MaxElement {
  render() {
    const apps = [[28, 'folder', 0], [48, 'chrome', 0], [69, 'max', 1], [92, 'media', 0], [112, 'ps', 0], [132, 'notes', 0], [153, 'ai', 0], [174, 'img', 0]];
    return `<style>
      :host { display: flex; height: 14px; align-items: center; background: radial-gradient(ellipse at 58% 100%, #14458c, #0b2c6a 60%); border-top: 1px solid #0b1c3f; box-sizing: border-box; color: #e2e9f2; font-size: 5.500px; white-space: nowrap; }
      .orb { flex: none; width: 18px; height: 16px; border-radius: 50%; margin: -3px 7px 0 3px; background: radial-gradient(circle at 50% 35%, #a9d8f0, #2e79b8 55%, #123f73); display: flex; align-items: center; justify-content: center; border: 1px solid #0a2a55; box-sizing: border-box; }
      .flag { width: 7px; height: 7px; background: conic-gradient(#6fb544 0 25%, #f1b51a 0 50%, #2b7ad0 0 75%, #e24b2a 0); }
      .app { flex: none; height: 13px; display: flex; align-items: center; justify-content: center; background: linear-gradient(#4a6c9e, #2b5090); border-radius: 2px; box-sizing: border-box; border: 1px solid #2f5487; }
      .app.on { background: linear-gradient(#b9c7d8, #8ea3bd); }
    </style>
    <span class="orb"><i class="flag"></i></span>
    ${apps.map(([x, n, on], i) => {
      const next = apps[i + 1] ? apps[i + 1][0] : 194;
      return `<span class="app ${on ? 'on' : ''}" style="width:${next - x - 2}px;margin-right:2px">${svg(n, 10)}</span>`;
    }).join('')}
    <span style="flex:none;width:397px"></span>
    <span style="flex:none;width:28px">Programas</span><span style="font-size:5px">»</span>
    <span style="margin-left:8px;color:#9fb4d2">ES</span>
    <span style="margin-left:7px;font-size:4.500px">▲</span>
    <span style="margin-left:4px">${svg('flag', 8)}</span>
    <span style="margin-left:3px">${svg('bars', 8)}</span>
    <span style="margin-left:3px">${svg('vol', 8)}</span>
    <span style="margin-left:16px">0:02</span>`;
  }
}

class MaxApp extends MaxElement {
  render() {
    return `<style>
      :host { display: block; position: relative; width: 728px; height: 409px; overflow: hidden; background: #444; filter: blur(.3px); }
      .work { display: grid; grid-template-columns: 630px 14px 84px; grid-template-rows: 314px 21px 22px; height: 357px; }
      max-viewport { grid-column: 1 / 3; grid-row: 1; }
      max-ruler { grid-column: 1 / 3; grid-row: 2; }
      max-cmd-panel { grid-column: 3; grid-row: 1 / 3; }
      max-status { grid-column: 1; grid-row: 3; }
      max-nav { grid-column: 2 / 4; grid-row: 3; }
    </style>
    <max-titlebar></max-titlebar>
    <max-menubar></max-menubar>
    <max-toolbar></max-toolbar>
    <div class="work">
      <max-viewport></max-viewport>
      <max-ruler></max-ruler>
      <max-cmd-panel></max-cmd-panel>
      <max-status></max-status>
      <max-nav></max-nav>
    </div>
    <max-taskbar></max-taskbar>
    <max-dialog></max-dialog>`;
  }
}

customElements.define('max-btn', MaxBtn);
customElements.define('max-rollout', MaxRollout);
customElements.define('max-stack', MaxStack);
customElements.define('max-titlebar', MaxTitlebar);
customElements.define('max-menubar', MaxMenubar);
customElements.define('max-toolbar', MaxToolbar);
customElements.define('max-viewport', MaxViewport);
customElements.define('max-cmd-panel', MaxCmdPanel);
customElements.define('max-ruler', MaxRuler);
customElements.define('max-status', MaxStatus);
customElements.define('max-nav', MaxNav);
customElements.define('max-dialog', MaxDialog);
customElements.define('max-taskbar', MaxTaskbar);
customElements.define('max-app', MaxApp);
</script>
</body>
</html>
